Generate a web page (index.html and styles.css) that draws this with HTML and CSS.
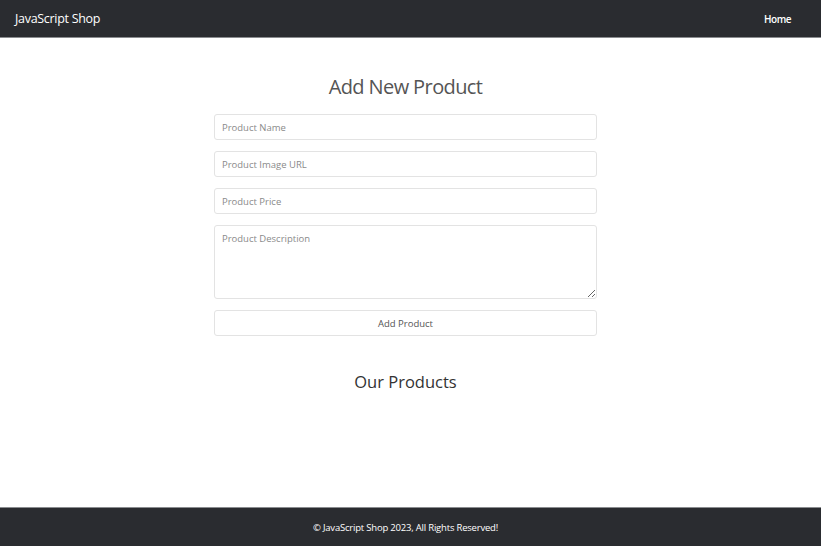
FILE: index.html
```html
<!DOCTYPE html>
<html>
<head>
<meta charset="utf-8">
<link rel="stylesheet" href="styles.css">
</head>
<body>
<header class="navbar">
  <span class="brand">JavaScript Shop</span>
  <span class="nav-link">Home</span>
</header>
<main class="main">
  <h1 class="title">Add New Product</h1>
  <form class="form">
    <input class="field" type="text" placeholder="Product Name">
    <input class="field" type="text" placeholder="Product Image URL">
    <input class="field" type="text" placeholder="Product Price">
    <textarea class="field area" placeholder="Product Description"></textarea>
    <button class="btn" type="button">Add Product</button>
  </form>
  <h2 class="subtitle">Our Products</h2>
</main>
<footer class="footer">© JavaScript Shop 2023, All Rights Reserved!</footer>
</body>
</html>
```
FILE: styles.css
```css
* { box-sizing: border-box; }
html, body { margin: 0; padding: 0; background: #fff; }
body {
  font-family: "Open Sans", "Noto Sans", sans-serif;
  width: 821px;
  height: 548px;
  overflow: hidden;
}
.navbar {
  height: 38px;
  background: #2a2c30;
  border-bottom: 1px solid #8a8c8f;
  display: flex;
  align-items: center;
  justify-content: space-between;
  padding: 0 30px 0 15px;
  color: #fff;
}
.brand { font-size: 12.5px; letter-spacing: -0.3px; }
.nav-link { font-size: 10px; font-weight: 600; letter-spacing: -0.5px; }
.main {
  height: 469px;
  display: flex;
  flex-direction: column;
  align-items: center;
  padding-right: 10px;
}
.title {
  margin: 34px 0 12px;
  font-size: 20px;
  font-weight: 400;
  color: #555;
  line-height: 30px;
  letter-spacing: -0.6px;
}
.form {
  width: 383px;
  display: flex;
  flex-direction: column;
  gap: 11px;
}
.field {
  display: block;
  width: 100%;
  height: 26px;
  border: 1px solid #e3e3e3;
  border-radius: 3px;
  padding: 0 7px;
  font-family: "Open Sans", "Noto Sans", sans-serif;
  font-size: 9.5px;
  color: #555;
  outline: none;
}
.field::placeholder { color: #8a8a8a; }
.area {
  height: 74px;
  padding-top: 6px;
  resize: vertical;
}
.btn {
  height: 26px;
  width: 100%;
  background: #fff;
  border: 1px solid #e3e3e3;
  border-radius: 3px;
  font-family: "Open Sans", "Noto Sans", sans-serif;
  font-size: 9.5px;
  color: #555;
}
.subtitle {
  margin: 34px 0 0;
  font-size: 16.5px;
  font-weight: 400;
  color: #333;
  line-height: 24px;
}
.footer {
  height: 39px;
  background: #2a2c30;
  border-top: 1px solid #8a8c8f;
  color: #fff;
  font-size: 9.5px;
  letter-spacing: -0.2px;
  display: flex;
  align-items: center;
  justify-content: center;
  padding-right: 10px;
}
```
